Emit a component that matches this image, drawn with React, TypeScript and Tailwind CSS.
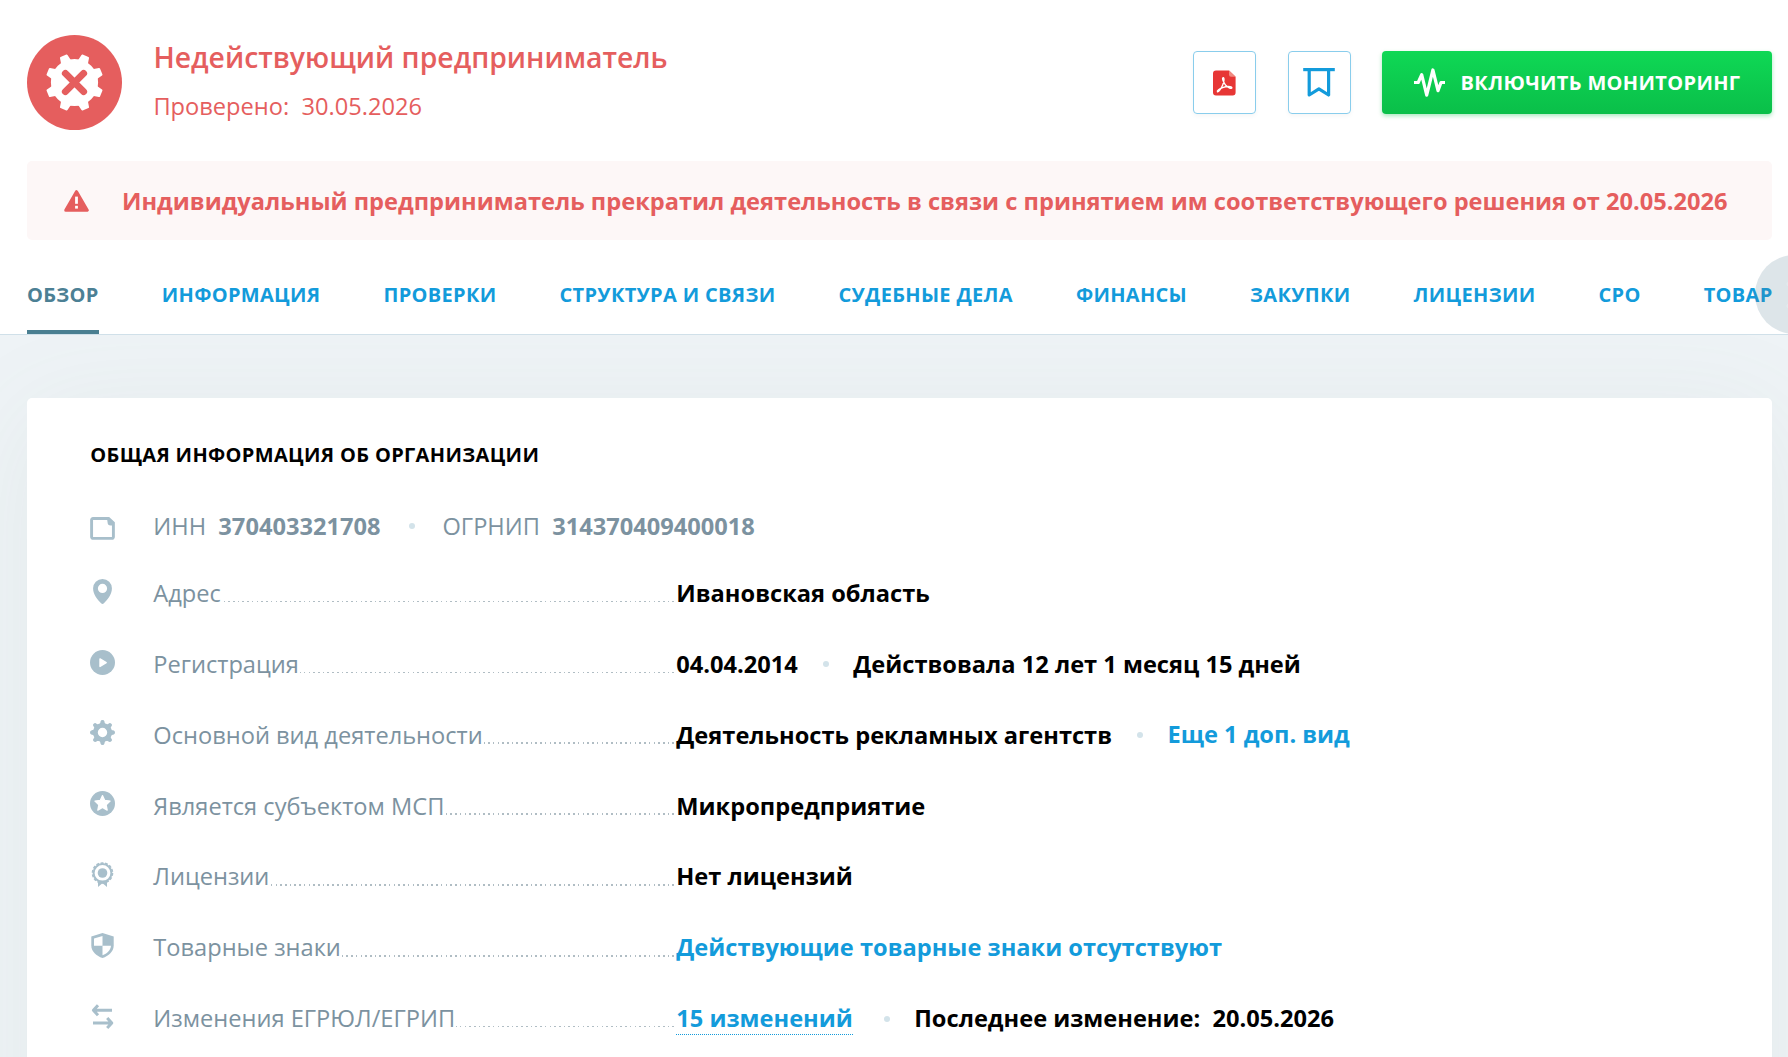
import React from 'react';

interface IconProps {
  className?: string;
}

interface InfoRowProps {
  icon: React.ReactNode;
  label: string;
  children: React.ReactNode;
}

const TEETH = [0, 45, 90, 135, 180, 225, 270, 315];

const StatusIcon = () => (
  <svg className="w-[95px] h-[95px] shrink-0" viewBox="0 0 95 95">
    <circle cx="47.5" cy="47.5" r="47.5" fill="#e55e5e" />
    <g fill="#fff" stroke="#fff" strokeWidth="2" strokeLinejoin="round">
      <circle cx="47.5" cy="47.5" r="22.6" />
      {TEETH.map((deg) => (
        <path key={deg} d="M43.1 26L44.4 19.6H50.6L51.9 26Z" transform={`rotate(${deg + 22.5} 47.5 47.5)`} />
      ))}
    </g>
    <path d="M38.4 38.4L56.6 56.6M56.6 38.4L38.4 56.6" stroke="#e55e5e" strokeWidth="7" strokeLinecap="round" />
  </svg>
);

const PdfIcon = () => (
  <svg className="w-[23px] h-[26px]" viewBox="0 0 23 26">
    <path d="M3 0.4H16L22.6 6.8V22.6A3 3 0 0 1 19.6 25.6H3A3 3 0 0 1 0 22.6V3.4A3 3 0 0 1 3 0.4Z" fill="#e73635" />
    <path d="M16 0.4L22.6 6.8H18A2 2 0 0 1 16 4.8Z" fill="#f08a80" />
    <path
      d="M10.2 7.6C8.6 7.8 10.3 12 12.4 14.8C14.2 17.2 18.6 19.4 18.9 17.8C19.2 16 13.4 16.2 9.6 17.6C6.4 18.8 3.6 20.6 4.4 21.7C5.4 22.8 8.4 18.2 9.8 14.8C11 11.8 11.6 7.6 10.2 7.6Z"
      fill="none"
      stroke="#fff"
      strokeWidth="1.3"
      strokeLinejoin="round"
    />
  </svg>
);

const BookmarkIcon = () => (
  <svg className="w-8 h-[29px] mr-[2px]" viewBox="0 0 32 29" fill="none" stroke="#139bdb" strokeWidth="3.2">
    <path d="M0.2 1.6H31.8" />
    <path d="M6.2 2V27L15.9 20.8L25.6 27V2" strokeLinejoin="round" />
  </svg>
);

const PulseIcon = () => (
  <svg className="w-[31px] h-[29px]" viewBox="0 0 31 29" fill="none" stroke="#fff" strokeWidth="3.2">
    <path d="M0 14.5H4.2L7.7 6.6L12.7 27.2L18.9 2L24 22.6L27 14.5H31" strokeLinejoin="round" />
  </svg>
);

const WarningIcon = () => (
  <svg className="w-[25px] h-[22px]" viewBox="0 0 25 22">
    <path d="M12.5 1.8L23.2 20.2H1.8Z" fill="#e55e5e" stroke="#e55e5e" strokeWidth="3.2" strokeLinejoin="round" />
    <path d="M12.5 6.6V13.8" stroke="#fff" strokeWidth="2.8" />
    <path d="M12.5 15.8V18.6" stroke="#fff" strokeWidth="2.8" />
  </svg>
);

const CardIcon = () => (
  <svg className="w-[25px] h-[23px]" viewBox="0 0 25 23">
    <path d="M3 1.5H18.6L23.4 6V20A1.4 1.4 0 0 1 22 21.4H3A1.4 1.4 0 0 1 1.6 20V3A1.4 1.4 0 0 1 3 1.5Z" fill="none" stroke="#a8bfcb" strokeWidth="2.9" />
    <path d="M17 1.5H19L24 6V8.4H20.6A3 3 0 0 1 17.6 5.4Z" fill="#a8bfcb" />
  </svg>
);

const PinIcon = () => (
  <svg className="w-[25px] h-[25px]" viewBox="0 0 25 25" fill="#a8bfcb">
    <path fillRule="evenodd" d="M12.5 0A9.4 9.4 0 0 1 21.9 9.6C21.9 15.6 17.6 20.6 13.9 24.3A2 2 0 0 1 11.1 24.3C7.4 20.6 3.1 15.6 3.1 9.6A9.4 9.4 0 0 1 12.5 0ZM12.5 4.8A4.6 4.6 0 1 0 12.5 14A4.6 4.6 0 1 0 12.5 4.8Z" />
  </svg>
);

const PlayIcon = () => (
  <svg className="w-[25px] h-[25px]" viewBox="0 0 25 25">
    <circle cx="12.5" cy="12.5" r="12.5" fill="#a8bfcb" />
    <path d="M10 8.9L16.2 12.7L10 16.5Z" fill="#fff" stroke="#fff" strokeWidth="1.4" strokeLinejoin="round" />
  </svg>
);

const GearIcon = () => (
  <svg className="w-[25px] h-[25px]" viewBox="0 0 25 25" fill="#a8bfcb">
    {TEETH.map((deg) => (
      <path key={deg} d="M8.8 5C10.4 3.6 10.3 2.4 10.6 1.2Q10.9 0 12.5 0T14.4 1.2C14.7 2.4 14.6 3.6 16.2 5Z" transform={`rotate(${deg} 12.5 12.5)`} />
    ))}
    <circle cx="12.5" cy="12.5" r="7.1" fill="none" stroke="#a8bfcb" strokeWidth="4.8" />
  </svg>
);

const StarIcon = () => (
  <svg className="w-[25px] h-[25px]" viewBox="0 0 25 25">
    <circle cx="12.5" cy="12.5" r="12.5" fill="#a8bfcb" />
    <path d="M12.5 4.6L14.8 9.4L20.1 10.1L16.2 13.8L17.2 19.1L12.5 16.5L7.8 19.1L8.8 13.8L4.9 10.1L10.2 9.4Z" fill="#fff" stroke="#fff" strokeWidth="1.2" strokeLinejoin="round" />
  </svg>
);

const AwardIcon = () => (
  <svg className="w-[25px] h-[25px]" viewBox="0 0 25 25">
    <circle cx="12.5" cy="11" r="4.8" fill="#a8bfcb" />
    <circle cx="12.5" cy="11" r="8.9" fill="none" stroke="#a8bfcb" strokeWidth="2" />
    <circle cx="12.5" cy="11" r="10" fill="none" stroke="#a8bfcb" strokeWidth="1.6" strokeDasharray="2.9 1.59" />
    <path d="M8 18.6H17V25L14.7 23L12.5 21.2L10.3 23L8 25Z" fill="#a8bfcb" />
  </svg>
);

const ShieldIcon = () => (
  <svg className="w-[25px] h-[25px]" viewBox="0 0 25 25">
    <path d="M12.5 0L23.7 3.4V12.5C23.7 18.4 18.6 23 12.5 25C6.4 23 1.3 18.4 1.3 12.5V3.4Z" fill="#a8bfcb" />
    <path d="M12.5 3V12.7H4V5.5Z" fill="#fff" />
    <path d="M12.5 12.7H21C20.7 17 17 20.6 12.5 22.3Z" fill="#fff" />
  </svg>
);

const ArrowsIcon = () => (
  <svg className="w-[25px] h-[25px]" viewBox="0 0 25 25" fill="none" stroke="#a8bfcb" strokeWidth="3" strokeLinejoin="round">
    <path d="M22 6.2H4M8 1.2L3.4 6.2L8 11.2" />
    <path d="M3 18.9H21.6M17.2 13.9L21.8 18.9L17.2 23.9" />
  </svg>
);

const Bullet: React.FC<IconProps> = ({ className = 'ml-[25px] mr-[24.4px]' }) => (
  <span className={`w-1.5 h-1.5 mt-[13.5px] rounded-full bg-[#d3e3ea] shrink-0 ${className}`} />
);

const InfoRow: React.FC<InfoRowProps> = ({ icon, label, children }) => (
  <div className="flex h-[70.875px] items-start leading-8">
    <div className="w-[63px] pt-[1.8px] shrink-0">{icon}</div>
    <div className="w-[523px] shrink-0 flex pr-[2px]">
      <span className="text-[#7c92a0]">{label}</span>
      <span className="flex-1 ml-px mt-[23.75px] h-[1.575px] bg-[repeating-linear-gradient(to_left,#b0bdc4_0_1.575px,transparent_1.575px_4.725px)]" />
    </div>
    <div className="flex font-bold text-black">{children}</div>
  </div>
);

const TABS = [
  'ОБЗОР',
  'ИНФОРМАЦИЯ',
  'ПРОВЕРКИ',
  'СТРУКТУРА И СВЯЗИ',
  'СУДЕБНЫЕ ДЕЛА',
  'ФИНАНСЫ',
  'ЗАКУПКИ',
  'ЛИЦЕНЗИИ',
  'СРО',
  'ТОВАР',
];

export default function App() {
  return (
    <div className="h-[1057px] w-full overflow-hidden bg-[#eef3f6] font-['Open_Sans','Noto_Sans',sans-serif] text-[23.63px] whitespace-pre">
      <header className="relative z-10 h-[335px] bg-white border-b border-[#d0e0e9] pt-[35px] pl-[27px] pr-4">
        <div className="flex h-[95px]">
          <StatusIcon />
          <div className="ml-[31.4px] text-[#e55e5e]">
            <h1 className="text-[28.35px] leading-[38px] font-semibold mt-[3px]">Недействующий предприниматель</h1>
            <div className="leading-8 mt-[14px]">Проверено:  30.05.2026</div>
          </div>
          <div className="ml-auto mt-4 flex h-[63px]">
            <button className="w-[63px] h-[63px] rounded-[4px] border border-[#89cdec] flex items-center justify-center shadow-[0_2px_4px_rgba(0,0,0,0.04)]">
              <PdfIcon />
            </button>
            <button className="w-[63px] h-[63px] ml-8 rounded-[4px] border border-[#89cdec] flex items-center justify-center shadow-[0_2px_4px_rgba(0,0,0,0.04)]">
              <BookmarkIcon />
            </button>
            <button className="w-[390px] h-[63px] ml-[31px] pl-8 rounded-[4px] flex items-center bg-linear-to-b from-[#0fd855] to-[#0abf49] shadow-[0_2px_4px_rgba(10,190,72,0.35)] text-white text-[20px] font-bold tracking-[0.34px]">
              <PulseIcon />
              <span className="ml-[15.6px]">ВКЛЮЧИТЬ МОНИТОРИНГ</span>
            </button>
          </div>
        </div>

        <div className="mt-[31px] h-[79px] w-[1745px] rounded-[5px] bg-[#fdf7f7] flex items-center pt-[1.5px] text-[#e55e5e] font-bold">
          <div className="w-[95px] pl-[37px]">
            <WarningIcon />
          </div>
          Индивидуальный предприниматель прекратил деятельность в связи с принятием им соответствующего решения от 20.05.2026
        </div>

        <nav className="flex h-[94px] w-[1746px] gap-[63px] text-[20px] font-bold tracking-[0.32px] leading-[26px]">
          {TABS.map((tab, i) => (
            <a
              key={tab}
              className={`shrink-0 h-[94px] pt-[41.7px] ${i === 0 ? 'text-[#4c8094] border-b-4 border-[#4a7f91]' : 'text-[#139bdb]'}`}
            >
              {tab}
            </a>
          ))}
        </nav>

        {/* scroll button, half outside the window */}
        <div className="absolute left-[1755px] top-[255px] w-[79px] h-[79px] rounded-full bg-[#537f92]/20 flex items-center justify-center">
          <svg className="w-5 h-7 opacity-20" viewBox="0 0 20 28" fill="none" stroke="#fff" strokeWidth="5">
            <path d="M4 3L15 14L4 25" strokeLinecap="round" strokeLinejoin="round" />
          </svg>
        </div>
      </header>

      <main className="mt-[63px] ml-[27px] w-[1745px] h-[900px] rounded-[5px] bg-white shadow-[0_16px_110px_rgba(120,135,110,0.08)] pl-[63.3px] pt-[43.6px]">
        <h2 className="text-[20px] leading-[26px] font-bold tracking-[0.34px] text-black">ОБЩАЯ ИНФОРМАЦИЯ ОБ ОРГАНИЗАЦИИ</h2>

        <div className="flex mt-[42.4px] h-[66.9px] leading-8 text-[#7c92a0]">
          <div className="w-[63px] pt-[7.3px] shrink-0">
            <CardIcon />
          </div>
          <span>ИНН  <b>370403321708</b></span>
          <Bullet className="ml-[29px] mr-[27px]" />
          <span>ОГРНИП  <b>314370409400018</b></span>
        </div>

        <InfoRow icon={<PinIcon />} label="Адрес">Ивановская область</InfoRow>
        <InfoRow icon={<PlayIcon />} label="Регистрация">
          04.04.2014
          <Bullet />
          Действовала 12 лет 1 месяц 15 дней
        </InfoRow>
        <InfoRow icon={<GearIcon />} label="Основной вид деятельности">
          Деятельность рекламных агентств
          <Bullet />
          <a className="text-[#139bdb] -mt-px">Еще 1 доп. вид</a>
        </InfoRow>
        <InfoRow icon={<StarIcon />} label="Является субъектом МСП">Микропредприятие</InfoRow>
        <InfoRow icon={<AwardIcon />} label="Лицензии">Нет лицензий</InfoRow>
        <InfoRow icon={<ShieldIcon />} label="Товарные знаки">
          <a className="text-[#139bdb]">Действующие товарные знаки отсутствуют</a>
        </InfoRow>
        <InfoRow icon={<ArrowsIcon />} label="Изменения ЕГРЮЛ/ЕГРИП">
          <a className="h-[33px] text-[#139bdb] border-b border-dotted border-[#139bdb]">15 изменений</a>
          <Bullet className="ml-[31px] mr-[24.5px]" />
          Последнее изменение:  20.05.2026
        </InfoRow>
      </main>
    </div>
  );
}
